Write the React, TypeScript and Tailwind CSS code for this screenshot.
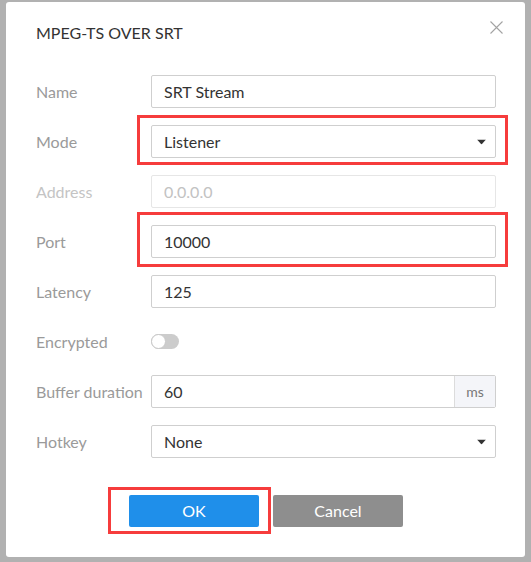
import React from 'react';

const font = { fontFamily: 'Lato, "Open Sans", sans-serif' };

function Caret() {
  return (
    <svg width="9" height="5" viewBox="0 0 9 5" className="absolute right-[10px] top-1/2 -translate-y-1/2">
      <path d="M0 0h9L4.5 5z" fill="#333" />
    </svg>
  );
}

function Row({ label, dim, children }: { label: string; dim?: boolean; children: React.ReactNode }) {
  return (
    <div className="flex h-[33px] items-center">
      <div className={`w-[115px] shrink-0 text-[16px] ${dim ? 'text-[#c4c4c4]' : 'text-[#9a9a9a]'}`}>{label}</div>
      <div className="relative flex-1 h-full">{children}</div>
    </div>
  );
}

const box = 'h-full w-full flex items-center rounded-[2px] border border-[#cfcfcf] bg-white px-[12px] text-[16px] text-[#333]';

export default function App() {
  return (
    <div className="w-[531px] h-[562px] bg-[#b1b1b1] pt-[2px] px-[6px] pb-[5px]" style={font}>
      <div className="relative h-full rounded-[3px] bg-white pt-[21px] pl-[30px] pr-[29px]">
        <div className="text-[16px] leading-[20px] text-[#333]">MPEG-TS OVER SRT</div>
        <button className="absolute right-[22px] top-[19px] p-0" aria-label="close">
          <svg width="13" height="13" viewBox="0 0 13 13">
            <path d="M0.5 0.5l12 12M12.5 0.5l-12 12" stroke="#a3a3a3" strokeWidth="1.1" />
          </svg>
        </button>

        <div className="mt-[32px] flex flex-col gap-[17px]">
          <Row label="Name">
            <div className={box}>SRT Stream</div>
          </Row>
          <Row label="Mode">
            <div className={box}>Listener</div>
            <Caret />
            <div className="absolute -left-[14px] -right-[12px] -top-[10px] -bottom-[7px] border-[3px] border-[#f63c3c]" />
          </Row>
          <Row label="Address" dim>
            <div className={`${box} border-[#e6e6e6] text-[#c2c2c2]`}>0.0.0.0</div>
          </Row>
          <Row label="Port">
            <div className={box}>10000</div>
            <div className="absolute -left-[14px] -right-[12px] -top-[13px] -bottom-[9px] border-[3px] border-[#f63c3c]" />
          </Row>
          <Row label="Latency">
            <div className={box}>125</div>
          </Row>
          <Row label="Encrypted">
            <div className="flex h-full items-center">
              <div className="relative h-[15px] w-[28px] rounded-full bg-[#cccccc]">
                <div className="absolute left-0 top-0 h-[15px] w-[15px] rounded-full border border-[#c8c8c8] bg-white" />
              </div>
            </div>
          </Row>
          <Row label="Buffer duration">
            <div className="flex h-full w-full rounded-[2px] border border-[#cfcfcf]">
              <div className="flex flex-1 items-center px-[12px] text-[16px] text-[#333]">60</div>
              <div className="flex w-[41px] items-center justify-center border-l border-[#dcdcdc] bg-[#f4f5f9] text-[14px] text-[#777]">ms</div>
            </div>
          </Row>
          <Row label="Hotkey">
            <div className={`${box} h-[34px]`}>None</div>
            <Caret />
          </Row>
        </div>

        <div className="mt-[37px] flex justify-center gap-[14px]">
          <div className="relative">
            <button className="h-[32px] w-[130px] rounded-[2px] bg-[#1f8fea] text-[16px] text-white">OK</button>
            <div className="absolute -left-[21px] -right-[12px] -top-[8px] -bottom-[7px] border-[3px] border-[#f63c3c]" />
          </div>
          <button className="h-[32px] w-[130px] rounded-[2px] bg-[#8e8e8e] text-[16px] text-white">Cancel</button>
        </div>
      </div>
    </div>
  );
}
